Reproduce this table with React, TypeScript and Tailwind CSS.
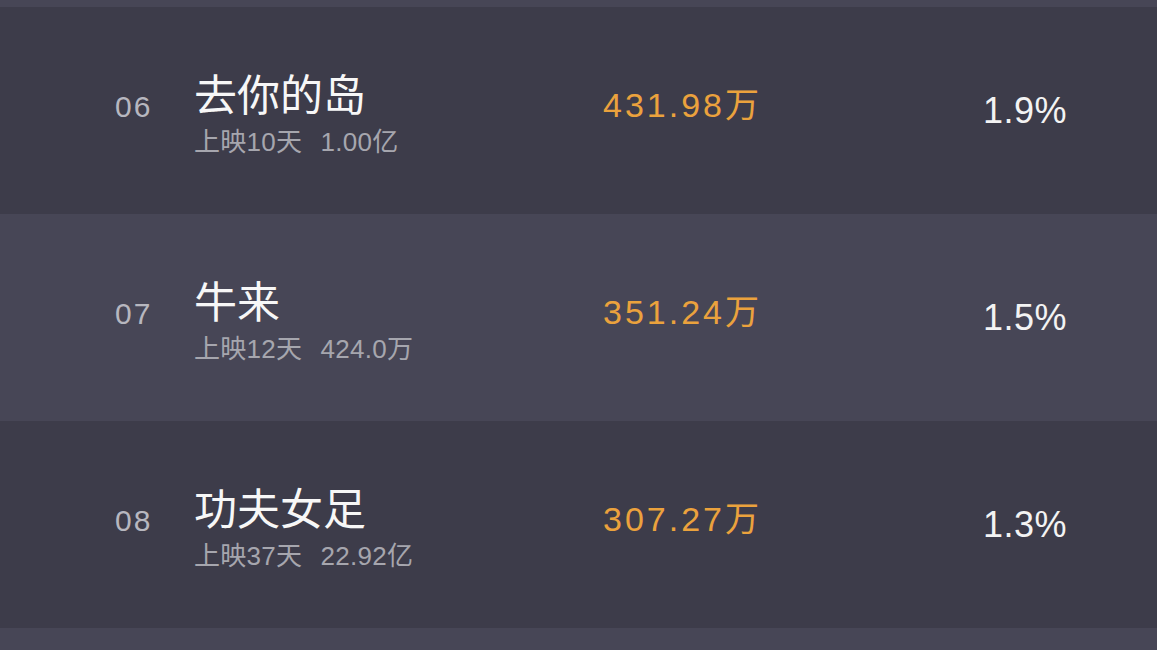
import React from 'react';

interface BoxOfficeRow {
  rank: string;
  title: string;
  days: string;
  total: string;
  today: string;
  share: string;
}

const rows: BoxOfficeRow[] = [
  { rank: '06', title: '去你的岛', days: '上映10天', total: '1.00亿', today: '431.98万', share: '1.9%' },
  { rank: '07', title: '牛来', days: '上映12天', total: '424.0万', today: '351.24万', share: '1.5%' },
  { rank: '08', title: '功夫女足', days: '上映37天', total: '22.92亿', today: '307.27万', share: '1.3%' },
];

const latin = { fontFamily: '"Liberation Sans", "Noto Sans CJK SC", Arial, sans-serif' };
const cjk = { fontFamily: '"Noto Sans CJK SC", "Liberation Sans", sans-serif' };

const Row: React.FC<{ row: BoxOfficeRow; light: boolean }> = ({ row, light }) => (
  <div className={`h-[207px] flex items-center pl-[115px] pr-[90px] ${light ? 'bg-[#474656]' : 'bg-[#3d3c4a]'}`}>
    <div className="w-[79px] mb-[8px] text-[30px] leading-none tracking-[2px] text-[#b7b7bf]" style={latin}>
      {row.rank}
    </div>
    <div className="w-[409px] mt-[4px] flex flex-col">
      <div className="text-[43px] leading-none text-[#f7f7f7]" style={cjk}>
        {row.title}
      </div>
      <div className="mt-[15px] text-[26px] leading-none tracking-[0.3px] text-[#a6a6ae] flex" style={latin}>
        <span>{row.days}</span>
        <span className="ml-[18px]">{row.total}</span>
      </div>
    </div>
    <div className="flex-1 mb-[11px] text-[34px] leading-none tracking-[3px] text-[#eba23d]" style={latin}>
      {row.today}
    </div>
    <div className="text-[36px] leading-none tracking-[0.5px] text-[#f3f3f3] text-right" style={latin}>
      {row.share}
    </div>
  </div>
);

const App: React.FC = () => {
  return (
    <div className="w-full h-[650px] overflow-hidden bg-[#3d3c4a]">
      <div className="h-[7px] bg-[#474656]"></div>
      {rows.map((row, i) => (
        <Row key={row.rank} row={row} light={i % 2 === 1} />
      ))}
      <div className="h-[207px] bg-[#474656]"></div>
    </div>
  );
};

export default App;
